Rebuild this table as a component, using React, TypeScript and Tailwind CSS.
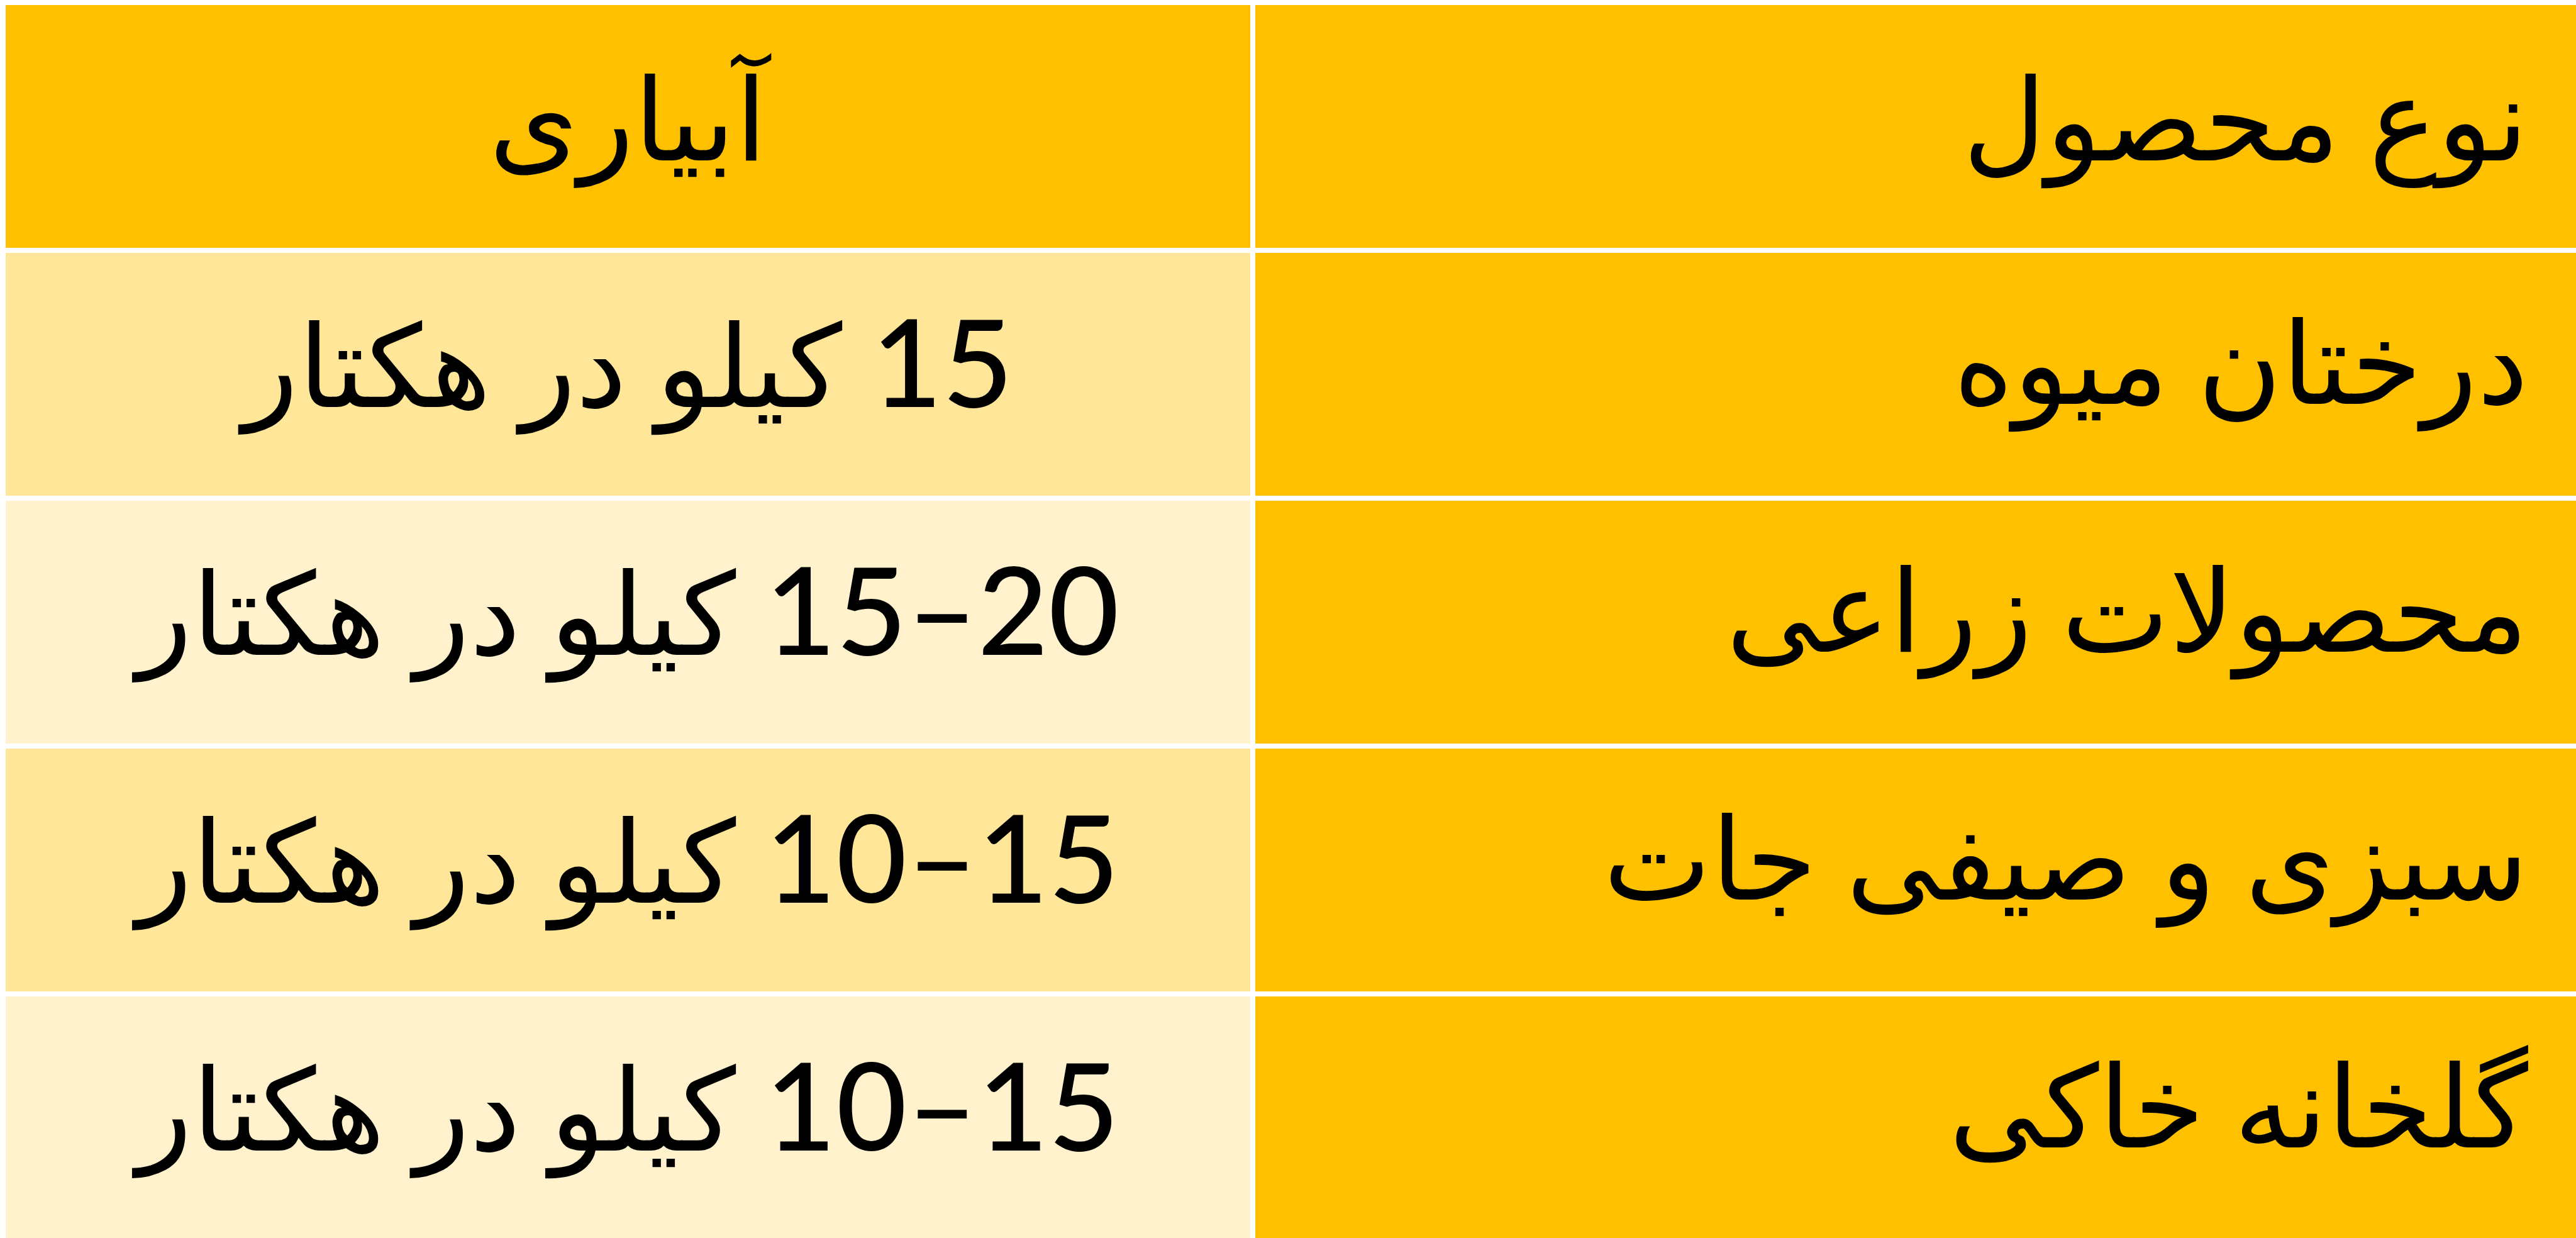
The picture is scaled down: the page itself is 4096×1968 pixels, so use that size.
const rows = [
  { name: 'درختان میوه', num: '15', bg: 'bg-[#ffe699]' },
  { name: 'محصولات زراعی', num: '15–20', bg: 'bg-[#fff2cc]' },
  { name: 'سبزی و صیفی جات', num: '10–15', bg: 'bg-[#ffe699]' },
  { name: 'گلخانه خاکی', num: '10–15', bg: 'bg-[#fff2cc]' },
]

const font = { fontFamily: 'Lato, "DejaVu Sans", sans-serif' }

export default function App() {
  return (
    <div
      dir="rtl"
      style={font}
      className="h-[1968px] w-[4096px] overflow-hidden bg-white pt-2 pl-[9px] text-black"
    >
      <div className="grid grid-cols-[2100px_1979px] auto-rows-[386px] gap-2 text-[182px] leading-none">
        <div className="flex items-center bg-[#ffc000] pr-[76px] pb-[32px]">نوع محصول</div>
        <div className="flex items-center justify-center bg-[#ffc000] pb-[32px]">آبیاری</div>
        {rows.map((r) => (
          <div key={r.name} className="contents">
            <div className="flex items-center bg-[#ffc000] pr-[76px] pb-[46px]">{r.name}</div>
            <div className={`flex items-center justify-center pb-[46px] ${r.bg}`}>
              <span>
                <span dir="ltr" className="text-[194px] font-medium tracking-[0.045em]">
                  {r.num}
                </span>{' '}
                کیلو در هکتار
              </span>
            </div>
          </div>
        ))}
      </div>
    </div>
  )
}
